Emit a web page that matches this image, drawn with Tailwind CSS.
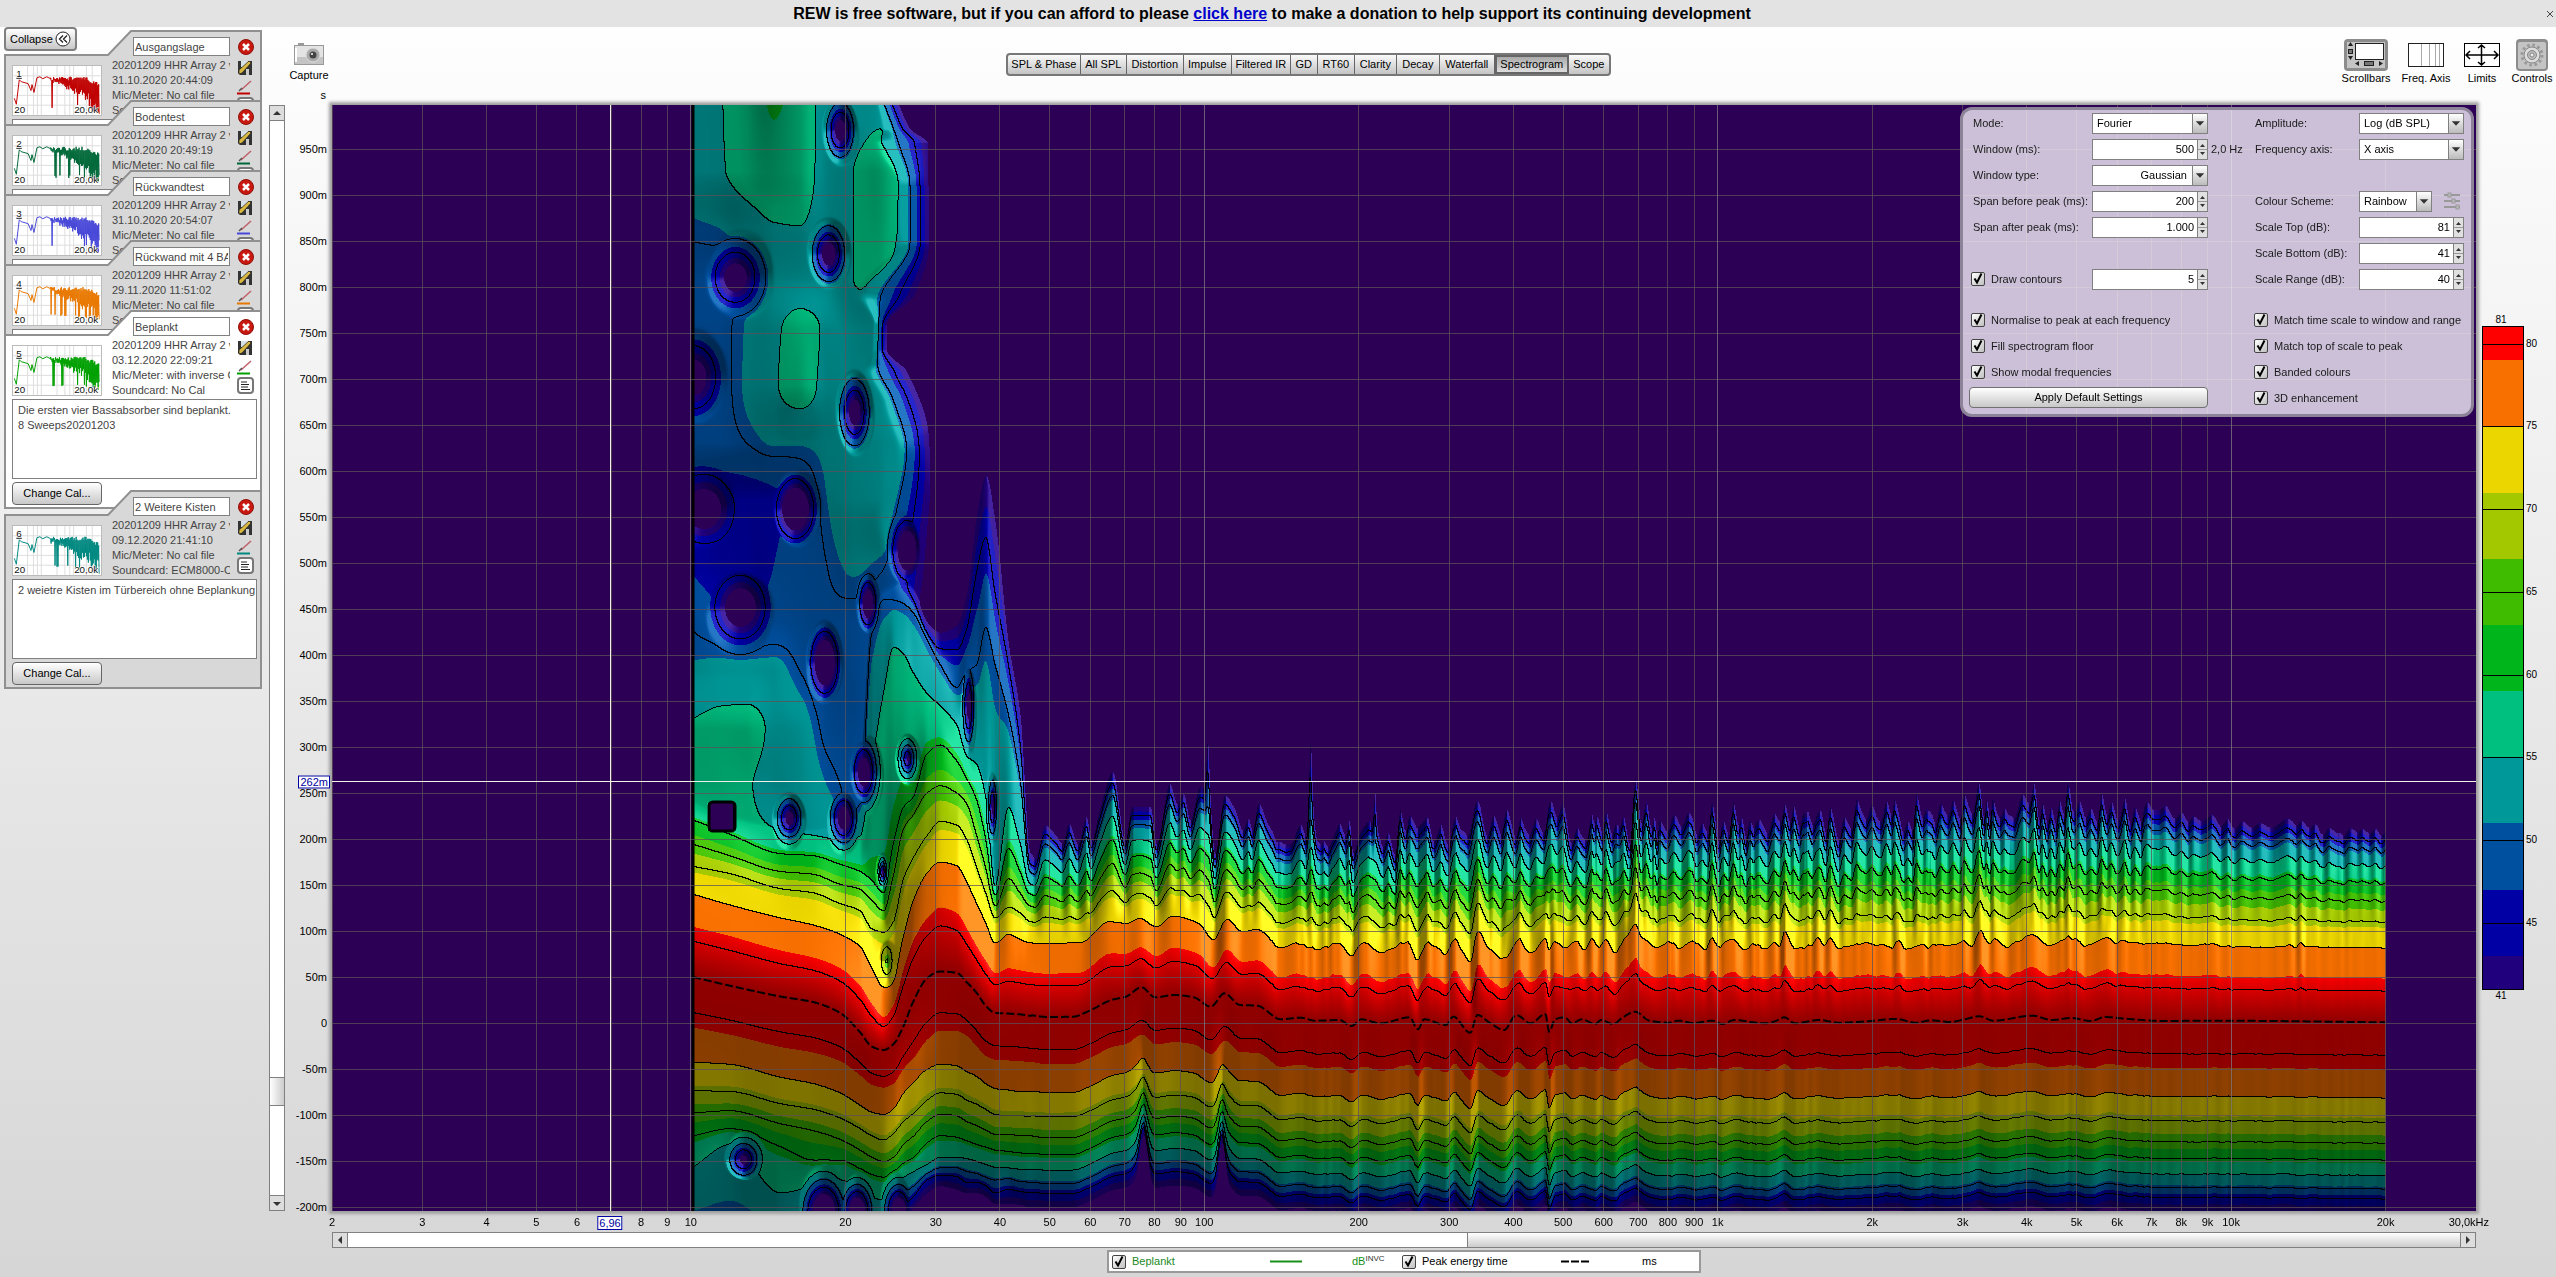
<!DOCTYPE html>
<html lang="en">
<head>
  <meta charset="UTF-8" />
  <meta name="viewport" content="width=device-width, initial-scale=1.0" />
  <title>REW | Spectrogram</title>
  <script src="https://cdn.jsdelivr.net/npm/@tailwindcss/browser@4"></script>
</head>
<body class="min-h-screen flex flex-col bg-linear-to-b from-white to-[#d6d6d6] font-['Liberation_Sans',Arial,sans-serif] text-[11px] leading-[15px] text-black">

  <!-- Donation banner -->
  <header class="h-[27px] shrink-0 bg-[#e3e3e3] flex items-center">
    <p class="flex-1 text-center text-[16px] leading-5 font-bold whitespace-pre">REW is free software, but if you can afford to please <a href="#" class="text-[#0000cc] underline">click here</a> to make a donation to help support its continuing development</p>
    <button aria-label="Close" class="w-3 h-4 flex items-center justify-center">
      <svg class="w-2 h-2" viewBox="0 0 8 8" stroke="#444" fill="none"><path d="M1 1l6 6M7 1l-6 6" /></svg>
    </button>
  </header>

  <div class="flex-1 flex">

    <!-- Measurement list -->
    <aside class="w-[265px] shrink-0 pl-1 relative">
      <button class="absolute left-1 top-0 w-[73px] h-6 rounded border-2 border-[#808080] bg-linear-to-b from-white to-[#c8c8c8] flex items-center justify-between pl-1 pr-1">Collapse
        <svg class="w-4 h-4" viewBox="0 0 16 16" fill="none" stroke="#222"><circle cx="8" cy="8" r="7" fill="#fff" /><path d="M8 4.500l-3.500 3.500 3.500 3.500M12 4.500l-3.500 3.500 3.500 3.500" stroke-width="1.300" /></svg>
      </button>
      <div id="measurements" class="pt-[3px]"></div>
    </aside>

    <main class="flex-1 min-w-0 flex flex-col">

      <!-- Toolbar -->
      <div class="h-[78px] shrink-0 flex pl-1">
        <div class="w-[300px] flex flex-col justify-between pl-[20px] pt-4">
          <button class="w-10 flex flex-col items-center gap-[3px]">
            <svg class="w-[30px] h-[22px]" viewBox="0 0 30 22">
              <rect x="4" y="0" width="6" height="3" fill="#999" />
              <rect x=".5" y="2.500" width="29" height="19" fill="#e4e4e4" stroke="#999" />
              <rect x="1" y="14" width="28" height="7" fill="#c4c4c4" /><path d="M2 5v14" stroke="#fff" stroke-width="2" />
              <circle cx="19" cy="12" r="7" fill="#aaa" stroke="#ddd" /><circle cx="19" cy="12" r="3.500" fill="#444" /><circle cx="18" cy="11" r="1" fill="#fff" />
            </svg>
            Capture
          </button>
          <span class="w-[37px] text-right pb-[2px]">s</span>
        </div>

        <div class="grow-[436]"></div>
        <nav id="graphTabs" class="mt-[26px] h-[23px] flex rounded border-2 border-[#777] bg-linear-to-b from-[#fafafa] to-[#c4c4c4] overflow-hidden"></nav>
        <div class="grow-[644]"></div>

        <div class="w-[300px] flex justify-end items-start gap-2 pt-3 pr-[3px]">
          <button class="w-[50px] flex flex-col items-center">
            <svg class="w-11 h-8" viewBox="0 0 44 32"><rect width="44" height="32" rx="4" fill="#8c8c8c" /><rect x="3" y="3" width="38" height="26" fill="#c4c4c4" /><rect x="11.500" y="4.500" width="28" height="16" fill="#fff" stroke="#222" /><path d="M6.500 3l2.500 4H4zM6.500 21l2.500-4H4zM11 24.500l4-2.500v5zM39 24.500l-4-2.500v5z" fill="#222" /><rect x="4.500" y="10.500" width="4" height="4" fill="#777" stroke="#222" /><rect x="20.500" y="22.500" width="9" height="4" fill="#777" stroke="#222" /></svg>
            Scrollbars
          </button>
          <button class="w-[54px] flex flex-col items-center whitespace-nowrap">
            <svg class="w-9 h-8" viewBox="0 0 36 32"><rect x=".5" y="4.500" width="35" height="23" fill="#fff" stroke="#222" /><path d="M13.500 5v22M21.500 5v22M27.500 5v22M31.500 5v22" stroke="#aaa" /></svg>
            Freq. Axis
          </button>
          <button class="w-[42px] flex flex-col items-center">
            <svg class="w-9 h-8" viewBox="0 0 36 32" fill="none" stroke="#000" stroke-width="1.500"><rect x=".5" y="4.500" width="35" height="23" fill="#fff" stroke-width="1" /><path d="M2 16h32M17.500 6v20M6 12l-4 4 4 4M30 12l4 4-4 4M14 9l3.500-3L21 9M14 23l3.500 3 3.500-3" /></svg>
            Limits
          </button>
          <button class="w-[42px] flex flex-col items-center">
            <svg class="w-8 h-8" viewBox="0 0 32 32"><rect width="32" height="32" rx="4" fill="#8c8c8c" /><rect x="2" y="3" width="28" height="27" rx="2" fill="#c4c4c4" /><circle cx="16" cy="16" r="10" fill="none" stroke="#999" stroke-width="3" stroke-dasharray="2.600 2.636" /><circle cx="16" cy="16" r="8" fill="#ddd" stroke="#888" /><circle cx="16" cy="16" r="4.500" fill="#bbb" stroke="#888" /><circle cx="16" cy="16" r="2" fill="#eee" stroke="#888" /></svg>
            Controls
          </button>
        </div>
      </div>

      <!-- Graph row -->
      <div class="flex-1 min-h-[700px] flex pl-1">
        <div class="w-4 flex flex-col border border-[#808080] bg-white" aria-hidden="true">
          <svg class="w-full h-[15px] border-b border-[#808080] bg-[#ddd]" viewBox="0 0 14 14"><path d="M7 5l4 4H3z" fill="#333" /></svg>
          <div class="grow-[957]"></div>
          <div class="h-[29px] border-y border-[#808080] bg-linear-to-r from-white to-[#ccc]"></div>
          <div class="grow-[89]"></div>
          <svg class="w-full h-[15px] border-t border-[#808080] bg-[#ddd]" viewBox="0 0 14 14"><path d="M7 10l4-4H3z" fill="#333" /></svg>
        </div>

        <div id="timeAxis" class="w-[47px] relative"></div>

        <div class="flex-1 min-w-0 relative bg-[#2c0054] shadow-[0_0_3px_3px_#a0a0a0]">
          <canvas id="spectrogram" width="2144" height="1106" class="absolute inset-0 w-full h-full"></canvas>
          <svg id="gridLines" class="absolute inset-0 w-full h-full" viewBox="0 0 2144 1106" preserveAspectRatio="none" shape-rendering="crispEdges"></svg>

          <!-- Graph controls -->
          <form class="absolute right-[2px] top-[2px] w-[514px] h-[310px] rounded-xl border-[3px] border-[#8d8398] bg-[#f4f0f9]/80 pl-[6px] pt-0 flex text-[#1a1a1a]">
            <div class="w-[283px]">
              <div class="h-[26px] flex items-center"><label for="mode" class="w-[123px] pl-1">Mode:</label>
                <span class="relative"><select id="mode" class="appearance-none w-[116px] h-[21px] border border-[#808080] bg-white pl-1 text-black"><option>Fourier</option></select>
                <svg class="absolute right-px top-px w-[15px] h-[19px] border-l border-[#808080] bg-linear-to-b from-white to-[#bbb] pointer-events-none" viewBox="0 0 15 19"><path d="M3 7h9l-4.500 5z" fill="#333" /></svg></span></div>
              <div class="h-[26px] flex items-center"><label for="windowMs" class="w-[123px] pl-1">Window (ms):</label><span data-spin="windowMs" data-value="500" class="w-[116px]"></span><span class="pl-[3px]">2,0 Hz</span></div>
              <div class="h-[26px] flex items-center"><label for="windowType" class="w-[123px] pl-1">Window type:</label>
                <span class="relative"><select id="windowType" class="appearance-none w-[116px] h-[21px] border border-[#808080] bg-white pr-5 text-black [text-align-last:right]"><option>Gaussian</option></select>
                <svg class="absolute right-px top-px w-[15px] h-[19px] border-l border-[#808080] bg-linear-to-b from-white to-[#bbb] pointer-events-none" viewBox="0 0 15 19"><path d="M3 7h9l-4.500 5z" fill="#333" /></svg></span></div>
              <div class="h-[26px] flex items-center"><label for="spanBefore" class="w-[123px] pl-1 whitespace-nowrap">Span before peak (ms):</label><span data-spin="spanBefore" data-value="200" class="w-[116px]"></span></div>
              <div class="h-[26px] flex items-center"><label for="spanAfter" class="w-[123px] pl-1">Span after peak (ms):</label><span data-spin="spanAfter" data-value="1.000" class="w-[116px]"></span></div>
              <div class="h-[26px]"></div>
              <div class="h-[26px] flex items-center mb-[15px]"><span data-check="Draw contours" class="w-[123px]"></span><span data-spin="contours" data-value="5" class="w-[116px]"></span></div>
              <div data-check="Normalise to peak at each frequency" class="h-[26px] flex items-center"></div>
              <div data-check="Fill spectrogram floor" class="h-[26px] flex items-center"></div>
              <div data-check="Show modal frequencies" class="h-[26px] flex items-center"></div>
              <button type="button" class="mt-[2px] w-[239px] h-[21px] rounded border border-[#707070] bg-linear-to-b from-white to-[#c8c8c8] text-black">Apply Default Settings</button>
            </div>
            <div class="flex-1">
              <div class="h-[26px] flex items-center"><label for="amplitude" class="w-[107px] pl-[3px]">Amplitude:</label>
                <span class="relative"><select id="amplitude" class="appearance-none w-[105px] h-[21px] border border-[#808080] bg-white pl-1 text-black"><option>Log (dB SPL)</option></select>
                <svg class="absolute right-px top-px w-[15px] h-[19px] border-l border-[#808080] bg-linear-to-b from-white to-[#bbb] pointer-events-none" viewBox="0 0 15 19"><path d="M3 7h9l-4.500 5z" fill="#333" /></svg></span></div>
              <div class="h-[26px] flex items-center"><label for="freqAxis" class="w-[107px] pl-[3px]">Frequency axis:</label>
                <span class="relative"><select id="freqAxis" class="appearance-none w-[105px] h-[21px] border border-[#808080] bg-white pl-1 text-black"><option>X axis</option></select>
                <svg class="absolute right-px top-px w-[15px] h-[19px] border-l border-[#808080] bg-linear-to-b from-white to-[#bbb] pointer-events-none" viewBox="0 0 15 19"><path d="M3 7h9l-4.500 5z" fill="#333" /></svg></span></div>
              <div class="h-[26px]"></div>
              <div class="h-[26px] flex items-center"><label for="scheme" class="w-[107px] pl-[3px]">Colour Scheme:</label>
                <span class="relative"><select id="scheme" class="appearance-none w-[73px] h-[21px] border border-[#808080] bg-white pl-1 text-black"><option>Rainbow</option></select>
                <svg class="absolute right-px top-px w-[15px] h-[19px] border-l border-[#808080] bg-linear-to-b from-white to-[#bbb] pointer-events-none" viewBox="0 0 15 19"><path d="M3 7h9l-4.500 5z" fill="#333" /></svg></span>
                <svg class="ml-3 w-4 h-[18px]" viewBox="0 0 16 18" stroke="#999" stroke-width="2" fill="#bbb"><path d="M0 3h16M0 9h16M0 15h16" /><rect x="4" y="1" width="3" height="4" stroke-width="1" /><rect x="8" y="7" width="3" height="4" stroke-width="1" /><rect x="12" y="13" width="3" height="4" stroke-width="1" /></svg></div>
              <div class="h-[26px] flex items-center"><label for="scaleTop" class="w-[107px] pl-[3px]">Scale Top (dB):</label><span data-spin="scaleTop" data-value="81" class="w-[105px]"></span></div>
              <div class="h-[26px] flex items-center"><label for="scaleBottom" class="w-[107px] pl-[3px]">Scale Bottom (dB):</label><span data-spin="scaleBottom" data-value="41" class="w-[105px]"></span></div>
              <div class="h-[26px] flex items-center mb-[15px]"><label for="scaleRange" class="w-[107px] pl-[3px]">Scale Range (dB):</label><span data-spin="scaleRange" data-value="40" class="w-[105px]"></span></div>
              <div data-check="Match time scale to window and range" class="h-[26px] flex items-center whitespace-nowrap"></div>
              <div data-check="Match top of scale to peak" class="h-[26px] flex items-center"></div>
              <div data-check="Banded colours" class="h-[26px] flex items-center"></div>
              <div data-check="3D enhancement" class="h-[26px] flex items-center"></div>
            </div>
          </form>
        </div>

        <!-- Colour scale -->
        <div class="w-20 shrink-0 pl-[6px] flex flex-col justify-center text-[10px] leading-[12px]">
          <div class="w-[42px] pr-1 text-center">81</div>
          <div class="h-[60%] w-[42px] relative border border-black flex flex-col" id="colourScale"></div>
          <div class="w-[42px] pr-1 text-center">41</div>
        </div>
      </div>

      <!-- Frequency axis, scroll bar and legend -->
      <div class="shrink-0 pl-[67px] pr-20">
        <div id="freqAxisLabels" class="h-[21px] relative"></div>
        <div class="h-4 flex border border-[#808080] bg-white" aria-hidden="true">
          <svg class="w-[15px] h-full border-r border-[#808080] bg-[#ddd]" viewBox="0 0 14 14"><path d="M5 7l4-4v8z" fill="#333" /></svg>
          <div class="grow-[1120]"></div>
          <div class="grow-[992] border-l border-[#808080] bg-linear-to-b from-white to-[#ccc]"></div>
          <svg class="w-[15px] h-full border-l border-[#808080] bg-[#ddd]" viewBox="0 0 14 14"><path d="M9 7L5 3v8z" fill="#333" /></svg>
        </div>
        <div class="h-[29px] flex justify-center items-start pt-[2px]">
          <div class="w-[594px] h-[23px] border-2 border-[#999] bg-white flex items-center pl-px">
            <span data-check="Beplankt" class="w-[160px] text-[#228822]"></span>
            <svg class="w-8 h-[3px]" viewBox="0 0 32 3"><path d="M0 1.500h32" stroke="#189018" stroke-width="2" /></svg>
            <span class="w-[98px] pl-[50px] text-[#189018] whitespace-nowrap">dB<sup class="text-[8px] text-[#333]">INVC</sup></span>
            <span data-check="Peak energy time" class="w-[161px]"></span>
            <svg class="w-7 h-[3px]" viewBox="0 0 28 3"><path d="M0 1.500h28" stroke="#000" stroke-width="2" stroke-dasharray="8 2" /></svg>
            <span class="pl-[53px]">ms</span>
          </div>
        </div>
      </div>
    </main>
  </div>

  <script>
    // small seeded generator so that every load draws the same traces
    let seed = 7;
    function rnd() {
      seed = (seed * 1664525 + 1013904223) % 4294967296;
      return seed / 4294967296;
    }

    // ---------- form parts ----------
    document.querySelectorAll('[data-spin]').forEach(el => {
      el.innerHTML = `<span class="flex h-[21px] border border-[#808080] bg-white">
        <input id="${el.dataset.spin}" type="text" value="${el.dataset.value}" class="flex-1 min-w-0 text-right pr-[3px] text-black outline-none">
        <svg class="w-[10px] h-[19px] border-l border-[#808080] bg-[#e0e0e0]" viewBox="0 0 9 19"><path d="M0 9.500h9" stroke="#999" /><path d="M4.500 4l2.500 3h-5zM4.500 15l2.500-3h-5z" fill="#333" /></svg></span>`;
    });

    document.querySelectorAll('[data-check]').forEach(el => {
      el.innerHTML = `<label class="flex items-center gap-[6px]"><span class="relative w-[14px] h-[14px] ml-[2px]">
        <input type="checkbox" checked class="appearance-none block w-[14px] h-[14px] rounded-[2px] border border-[#444] bg-linear-to-br from-white to-[#c0c0c0]">
        <svg class="absolute inset-0 w-full h-full pointer-events-none" viewBox="0 0 14 14" fill="none" stroke="#000" stroke-width="2"><path d="M3.500 6.500l2.500 4 4.500-9" /></svg></span>${el.dataset.check}</label>`;
    });

    const tabs = [
      ['SPL &amp; Phase', 73], ['All SPL', 46], ['Distortion', 57], ['Impulse', 48], ['Filtered IR', 59], ['GD', 27],
      ['RT60', 37], ['Clarity', 42], ['Decay', 43], ['Waterfall', 55], ['Spectrogram', 74], ['Scope', 40]
    ];
    document.getElementById('graphTabs').innerHTML = tabs.map(([name, w]) => name === 'Spectrogram'
      ? `<button style="width:${w}px" class="h-full whitespace-nowrap border-2 border-[#666] bg-linear-to-b from-[#aaa] to-[#ddd]">${name}</button>`
      : `<button style="width:${w}px" class="h-full whitespace-nowrap border-r border-[#666] last:border-r-0">${name}</button>`).join('');

    // ---------- measurements ----------
    const measurements = [
      { name: 'Ausgangslage', date: '31.10.2020 20:44:09', mic: 'No cal file', card: 'No Cal', colour: '#c00000', notes: '' },
      { name: 'Bodentest', date: '31.10.2020 20:49:19', mic: 'No cal file', card: 'No Cal', colour: '#006838', notes: '' },
      { name: 'Rückwandtest', date: '31.10.2020 20:54:07', mic: 'No cal file', card: 'No Cal', colour: '#4848d8', notes: '' },
      { name: 'Rückwand mit 4 BA', date: '29.11.2020 11:51:02', mic: 'No cal file', card: 'No Cal', colour: '#e87800', notes: '' },
      { name: 'Beplankt', date: '03.12.2020 22:09:21', mic: 'with inverse C', card: 'No Cal', colour: '#00a000', notes: 'Die ersten vier Bassabsorber sind beplankt.\n8 Sweeps20201203', selected: true },
      { name: '2 Weitere Kisten', date: '09.12.2020 21:41:10', mic: 'No cal file', card: 'ECM8000-CSL', colour: '#008880', notes: '2 weietre Kisten im Türbereich ohne Beplankung' }
    ];

    function thumbTrace() {
      let d = 'M1 33L3 39L6 14L8 16L15 18L18 25L19 19L21 27L24 12L27 11L30 13L34 11L38 13';
      for (let x = 38; x < 88; x += 1) {
        const p = (x - 38) / 50;
        const top = 11 + 4 * rnd() + 12 * Math.max(0, p - 0.72) * 2;
        const depth = rnd() < 0.14 ? 28 : 3 + 30 * Math.max(0, p - 0.1) * (0.5 + 0.6 * rnd());
        d += `L${x} ${top.toFixed(1)}L${x + 0.5} ${Math.min(49, top + depth).toFixed(1)}`;
      }
      return d;
    }

    document.getElementById('measurements').innerHTML = measurements.map((m, i) => {
      const fill = m.selected ? '#ffffff' : '#d8d8d8';
      const gap = i === 5 ? 'mt-[-19px]' : i ? 'mt-[-129px]' : '';
      return `
      <section class="relative w-[258px] h-[199px] ${gap}">
        <svg class="absolute inset-0 w-full h-full pointer-events-none" viewBox="0 0 258 199"><path d="M1 198V25H104L127 1H257V198Z" fill="${fill}" stroke="#909090" stroke-width="2" /></svg>
        <div class="relative pl-2 pr-1 pt-[7px]">
          <div class="flex justify-end items-center h-[19px]">
            <input type="text" aria-label="Measurement name" value="${m.name}" class="w-[97px] h-[19px] border border-[#808080] bg-white px-px text-[#444]">
            <button aria-label="Delete" class="ml-2 mr-1"><svg class="w-4 h-4" viewBox="0 0 16 16"><circle cx="8" cy="8" r="7.500" fill="#c81810" stroke="#901008" /><path d="M5 5l6 6M11 5l-6 6" stroke="#fff" stroke-width="2.500" /></svg></button>
          </div>
          <div class="flex pt-[2px]">
            <svg class="w-[90px] h-[51px] mt-[7px] bg-white border border-[#bbb]" viewBox="0 0 89 50">
              <path d="M0 10H89M0 20H89M0 30H89M0 40H89M14.500 0V50M20.500 0V50M24.500 0V50M28.500 0V50M44.500 0V50M52.500 0V50M57.500 0V50M61.500 0V50M74.500 0V50M80.500 0V50" stroke="#ddd" fill="none" />
              <path d="${thumbTrace()}" stroke="${m.colour}" fill="none" />
              <g font-size="10" fill="#111" stroke="#fff" stroke-width="1" paint-order="stroke"><text x="3" y="11" text-decoration="underline">${i + 1}</text><text x="1" y="48">20</text><text x="62" y="48">20,0k</text></g>
            </svg>
            <div class="ml-[10px] w-[118px] overflow-hidden whitespace-nowrap text-[#444]">
              <p>20201209 HHR Array 2 v</p><p>${m.date}</p><p>Mic/Meter: ${m.mic}</p><p>Soundcard: ${m.card}</p>
            </div>
            <div class="ml-[7px] mt-[2px] flex flex-col gap-[2px]">
              <svg class="w-4 h-4" viewBox="0 0 16 16"><path d="M1 1h14v14H3l-2-2z" fill="#333" /><rect x="4" y="1" width="7" height="6" fill="#d8e0e8" /><path d="M2 10L12 1l2 2-9 10-3 1z" fill="#d8b840" stroke="#222" stroke-width=".700" /><rect x="9" y="9" width="3" height="6" fill="#ccc" /></svg>
              <svg class="w-4 h-[17px]" viewBox="0 0 16 17"><path d="M4 12L14 3" stroke="#c06068" stroke-width="1.500" /><path d="M2 13l3-3" stroke="#555" stroke-width="1.500" /><path d="M0 15.500h13" stroke="${m.colour}" stroke-width="2" /></svg>
              <svg class="w-[17px] h-[17px]" viewBox="0 0 17 17"><rect x="1" y="1" width="15" height="15" rx="3" fill="#fff" stroke="#777" stroke-width="2" /><path d="M4 5h6M4 7.500h8M4 10h7M4 12.500h9" stroke="#222" /></svg>
            </div>
          </div>
          <textarea aria-label="Notes" class="block mt-[1px] w-[245px] h-[80px] resize-none border border-[#808080] bg-white pl-[5px] pt-[3px] text-[#444] overflow-hidden">${m.notes}</textarea>
          <button class="mt-[3px] w-[90px] h-[23px] rounded border border-[#666] bg-linear-to-b from-white to-[#c8c8c8]">Change Cal...</button>
        </div>
      </section>`;
    }).join('');

    // ---------- axes ----------
    const W = 2144, H = 1106, DECADE = 513.4, ZERO = 918;
    const freqX = f => Math.log10(f / 2) * DECADE;
    const timeY = ms => ZERO - ms * 0.92;

    let lines = '', labels = '';
    for (let ms = -200; ms <= 950; ms += 50) {
      const y = timeY(ms);
      lines += `<path d="M0 ${y}H${W}" stroke="#5c5058" stroke-opacity=".75" />`;
      labels += `<span style="top:${y / H * 100}%" class="absolute right-[5px] -translate-y-1/2">${ms ? ms + 'm' : 0}</span>`;
    }
    labels += `<span style="top:${timeY(262) / H * 100}%" class="absolute right-[2px] -translate-y-1/2 z-10 border border-[#0000a0] bg-white text-[#0000a0] leading-[11px] px-px">262m</span>`;
    document.getElementById('timeAxis').innerHTML = labels;

    labels = '';
    for (const dec of [1, 10, 100, 1000, 10000]) {
      for (let n = 1; n < 10; n++) {
        const f = n * dec;
        if (f < 2 || f > 20000) continue;
        lines += `<path d="M${freqX(f)} 0V${H}" stroke="${n === 1 ? '#807880' : '#5c5058'}" stroke-opacity=".75" />`;
        if (f === 7) continue;
        labels += `<span style="left:${freqX(f) / W * 100}%" class="absolute top-1 -translate-x-1/2">${f >= 1000 ? f / 1000 + 'k' : f}</span>`;
      }
    }
    labels += `<span class="absolute top-1 right-[-13px]">30,0kHz</span>
      <span style="left:${freqX(6.96) / W * 100}%" class="absolute top-[5px] -translate-x-1/2 border border-[#0000a0] bg-white text-[#0000a0] leading-[12px] px-px">6,96</span>`;
    document.getElementById('freqAxisLabels').innerHTML = labels;
    lines += `<path d="M${freqX(6.96)} 0V${H}M0 ${timeY(262)}H${W}" stroke="#f0f0e8" />`;
    document.getElementById('gridLines').innerHTML = lines;

    // ---------- colour scale ----------
    const bands = [
      [79, 255, 0, 0], [75, 248, 112, 0], [71, 236, 214, 0], [67, 164, 200, 0], [63, 64, 188, 0], [59, 0, 180, 28],
      [55, 0, 192, 128], [51, 0, 152, 152], [47, 0, 80, 160], [43, 0, 0, 164], [41, 32, 0, 124]
    ];
    let scale = '', from = 81;
    for (const [to, r, g, b] of bands) {
      scale += `<div style="height:${(from - to) * 2.5}%;background:rgb(${r},${g},${b})"></div>`;
      from = to;
    }
    for (let db = 80; db > 41; db -= 5) {
      scale += `<div style="top:${(81 - db) * 2.5}%" class="absolute left-0 w-full border-t border-black"></div>
        <span style="top:${(81 - db) * 2.5}%" class="absolute left-[43px] -translate-y-1/2">${db}</span>`;
    }
    document.getElementById('colourScale').innerHTML = scale;

    // ---------- spectrogram ----------
    // level contours from top to bottom, the peak (81) in the middle
    const levels = [41, 45, 50, 55, 60, 65, 70, 75, 79, 81, 79, 75, 70, 65, 60, 55, 50, 45, 41];

    // contour heights at the modal frequencies, one row per x
    const modal = [
      [40, 925, 950, 970, 985, 1008, 1042, 1073, 1112, 1157, 1228, 1298, 1347, 1387, 1418, 1450, 1493, 1570, 1640, 1700],
      [150, 940, 960, 980, 1003, 1028, 1058, 1083, 1127, 1170, 1240, 1308, 1350, 1388, 1415, 1440, 1462, 1560, 1620, 1700],
      [300, 960, 985, 1005, 1025, 1055, 1080, 1104, 1145, 1190, 1255, 1325, 1368, 1405, 1433, 1465, 1530, 1590, 1640, 1700],
      [400, 975, 990, 1010, 1030, 1058, 1084, 1110, 1155, 1200, 1263, 1333, 1377, 1413, 1443, 1484, 1520, 1560, 1600, 1640],
      [480, 960, 985, 1010, 1035, 1070, 1098, 1125, 1168, 1215, 1278, 1345, 1390, 1425, 1455, 1484, 1512, 1545, 1580, 1600],
      [540, 900, 930, 985, 1030, 1080, 1105, 1135, 1185, 1240, 1305, 1365, 1407, 1440, 1470, 1496, 1525, 1560, 1590, 1610],
      [575, 690, 710, 745, 930, 1092, 1120, 1160, 1215, 1265, 1325, 1378, 1417, 1450, 1480, 1504, 1536, 1575, 1600, 1620],
      [610, 640, 660, 700, 830, 1110, 1135, 1165, 1240, 1283, 1330, 1382, 1420, 1456, 1486, 1508, 1540, 1570, 1590, 1610],
      [640, 630, 655, 700, 766, 1040, 1085, 1150, 1230, 1265, 1322, 1376, 1412, 1446, 1480, 1500, 1522, 1552, 1575, 1595],
      [670, 640, 675, 705, 775, 990, 1020, 1090, 1170, 1215, 1297, 1355, 1390, 1430, 1462, 1488, 1508, 1532, 1550, 1570],
      [700, 680, 700, 718, 802, 975, 1000, 1060, 1120, 1175, 1262, 1340, 1375, 1418, 1450, 1480, 1500, 1520, 1535, 1550],
      [740, 730, 745, 755, 830, 915, 970, 1030, 1082, 1145, 1230, 1315, 1357, 1400, 1430, 1460, 1490, 1503, 1512, 1530],
      [780, 745, 768, 790, 848, 903, 960, 1010, 1067, 1130, 1220, 1302, 1350, 1390, 1420, 1450, 1480, 1495, 1505, 1520],
      [830, 735, 770, 822, 875, 925, 970, 1015, 1072, 1138, 1222, 1303, 1352, 1392, 1422, 1452, 1480, 1495, 1507, 1525],
      [860, 690, 740, 800, 918, 950, 985, 1035, 1095, 1160, 1235, 1310, 1360, 1400, 1430, 1457, 1482, 1500, 1515, 1530],
      [890, 580, 660, 790, 930, 980, 1030, 1075, 1125, 1185, 1250, 1325, 1367, 1406, 1436, 1462, 1486, 1503, 1515, 1530],
      [917, 525, 612, 738, 975, 1035, 1075, 1110, 1152, 1205, 1268, 1338, 1377, 1413, 1442, 1466, 1490, 1508, 1520, 1535],
      [945, 590, 690, 790, 1100, 1113, 1128, 1145, 1180, 1222, 1278, 1343, 1384, 1420, 1448, 1470, 1494, 1512, 1530, 1545],
      [985, 760, 790, 860, 990, 1048, 1090, 1130, 1168, 1215, 1279, 1344, 1386, 1422, 1448, 1472, 1495, 1510, 1525, 1545],
      [1020, 860, 900, 950, 1040, 1080, 1110, 1138, 1175, 1218, 1280, 1345, 1388, 1422, 1450, 1474, 1497, 1514, 1528, 1546],
      [1050, 1050, 1068, 1080, 1098, 1112, 1128, 1150, 1180, 1220, 1282, 1346, 1388, 1423, 1450, 1475, 1498, 1515, 1530, 1550],
      [1130, 1020, 1050, 1065, 1083, 1100, 1120, 1145, 1180, 1220, 1283, 1346, 1388, 1423, 1450, 1475, 1498, 1515, 1530, 1550]
    ];
    // decay shape above 45 Hz
    const base = [300, 325, 352, 395, 440, 490, 548, 622, 712, 845, 985, 1072, 1145, 1208, 1258, 1305, 1345, 1375, 1415];
    const spread = [1, 0.93, 0.85, 0.7, 0.5, 0.33, 0.15, 0];
    const peakLine = [0, 817, 60, 825, 100, 831, 150, 830, 185, 812, 230, 780, 260, 770, 292, 742, 320, 772, 360, 765, 400, 772, 435, 800, 463, 760, 495, 795, 530, 797, 580, 838, 620, 833, 650, 842, 700, 840, 725, 858, 745, 838, 785, 850, 845, 832, 862, 868, 875, 838, 920, 855, 935, 830, 970, 878, 985, 825, 1010, 848, 1040, 870, 1065, 825, 1095, 850, 1125, 822, 1133, 875, 1145, 838, 1165, 832, 1180, 850, 1200, 838, 1228, 852, 1240, 840, 1265, 852, 1285, 832, 1310, 815, 1340, 842, 1380, 848, 1400, 842, 1430, 849, 1470, 842, 1490, 852, 1515, 840, 1560, 848, 1580, 850, 1600, 843, 1618, 832, 1640, 850, 1690, 840, 1730, 848, 1780, 845, 1848, 837, 1890, 848, 1920, 841, 1960, 846, 1990, 838, 2020, 829, 2050, 842, 2130, 827, 2170, 840, 2210, 834, 2250, 843, 2280, 831, 2320, 836, 2400, 843, 2500, 842, 2860, 847];
    const midLine = [0, 605, 28, 582, 70, 610, 165, 608, 225, 545, 260, 550, 288, 535, 322, 560, 355, 528, 410, 550, 440, 598, 468, 537, 500, 575, 530, 568, 580, 620, 610, 610, 650, 625, 697, 610, 725, 645, 745, 607, 785, 635, 840, 605, 862, 658, 880, 607, 920, 640, 935, 597, 970, 665, 985, 575, 1010, 625, 1040, 658, 1070, 600, 1095, 640, 1125, 595, 1133, 630, 1145, 605, 1165, 625, 1190, 602, 1205, 630, 1220, 600, 1235, 625, 1250, 598, 1268, 635, 1310, 555, 1325, 590, 1350, 620, 1388, 605, 1400, 625, 1435, 605, 1455, 625, 1468, 595, 1480, 620, 1512, 600, 1530, 625, 1560, 612, 1575, 628, 1597, 605, 1608, 622, 1619, 578, 1640, 626, 1670, 618, 1687, 595, 1700, 612, 1712, 590, 1728, 622, 1800, 612, 1840, 620, 1849, 600, 1870, 622, 1900, 610, 1915, 620, 1940, 608, 1960, 620, 1987, 600, 2005, 615, 2024, 575, 2042, 614, 2052, 600, 2075, 622, 2100, 605, 2133, 585, 2165, 615, 2207, 592, 2240, 615, 2279, 592, 2300, 610, 2320, 600, 2350, 612, 2397, 610, 2440, 616, 2497, 612, 2520, 618, 2645, 622, 2660, 616, 2672, 622, 2683, 605, 2695, 620, 2860, 624];
    const floorLine = [0, 160, 40, 250, 70, 370, 92, 255, 115, 285, 128, 310, 142, 250, 160, 310, 178, 230, 188, 300, 205, 210, 232, 95, 258, 300, 272, 200, 310, 200, 322, 310, 350, 130, 365, 190, 378, 160, 392, 240, 412, 140, 430, 160, 443, 340, 463, 165, 485, 210, 500, 270, 512, 235, 520, 270, 533, 190, 552, 250, 570, 290, 600, 310, 620, 250, 630, 290, 640, 200, 655, 290, 680, 310, 700, 250, 712, 290, 720, 235, 728, 330, 745, 260];
    const floorPeaks = [773, 250, 800, 280, 825, 215, 845, 225, 877, 225, 910, 260, 935, 235, 983, 180, 1018, 230, 1045, 215, 1075, 240, 1105, 235, 1133, 190, 1160, 195, 1190, 260, 1220, 235, 1230, 235, 1250, 215, 1270, 240, 1285, 240, 1310, 125, 1332, 190, 1350, 230, 1360, 235, 1388, 215, 1420, 230, 1450, 240, 1468, 190, 1490, 250, 1512, 190, 1530, 235, 1545, 235, 1560, 235, 1597, 215, 1619, 200, 1637, 200, 1657, 215, 1692, 210, 1712, 195, 1740, 235, 1767, 190, 1799, 195, 1829, 185, 1845, 165, 1872, 230, 1890, 150, 1912, 195, 1940, 180, 1967, 190, 1989, 160, 2019, 140, 2035, 180, 2047, 190, 2072, 210, 2107, 165, 2133, 130, 2150, 180, 2167, 200, 2185, 185, 2202, 140, 2227, 190, 2250, 200, 2272, 155, 2292, 200, 2320, 170, 2340, 205, 2362, 190, 2402, 200, 2437, 220, 2460, 225, 2497, 225, 2530, 240, 2560, 245, 2597, 248, 2654, 240, 2685, 235, 2712, 255, 2742, 262, 2787, 265, 2810, 266, 2835, 268, 2858, 270];
    for (let i = 0; i < floorPeaks.length; i += 2) {
      const x = floorPeaks[i], y = floorPeaks[i + 1];
      floorLine.push(x, y);
      if (i + 2 < floorPeaks.length) {
        const dip = x > 2350 ? 10 + 10 * rnd() : 25 + 35 * rnd();
        floorLine.push((x * 0.4 + floorPeaks[i + 2] * 0.6), Math.max(y, floorPeaks[i + 3]) + dip);
      }
    }

    // monotone cubic through the points xs, ys
    function curve(xs, ys) {
      const n = xs.length, d = [], m = [];
      for (let i = 0; i < n - 1; i++) d.push((ys[i + 1] - ys[i]) / (xs[i + 1] - xs[i]));
      for (let i = 0; i < n; i++) {
        const a = d[Math.max(0, i - 1)], b = d[Math.min(n - 2, i)];
        m.push(a * b <= 0 ? 0 : 2 * a * b / (a + b));
      }
      return x => {
        if (x <= xs[0]) return ys[0];
        if (x >= xs[n - 1]) return ys[n - 1];
        let lo = 0, hi = n - 1;
        while (hi - lo > 1) { const mid = (lo + hi) >> 1; if (xs[mid] <= x) lo = mid; else hi = mid; }
        const h = xs[hi] - xs[lo], t = (x - xs[lo]) / h, t2 = t * t, t3 = t2 * t;
        return (2 * t3 - 3 * t2 + 1) * ys[lo] + (t3 - 2 * t2 + t) * h * m[lo] + (3 * t2 - 2 * t3) * ys[hi] + (t3 - t2) * h * m[hi];
      };
    }
    const pairs = a => curve(a.filter((_, i) => i % 2 === 0), a.filter((_, i) => i % 2 === 1));

    const modalCurves = levels.map((_, k) => curve(modal.map(r => r[0]), modal.map(r => r[k + 1])));
    const peakAt = pairs(peakLine), midAt = pairs(midLine), floorAt = pairs(floorLine);
    const bell = (x, c, w) => Math.exp(-(((x - c) / w) ** 2));

    // fine ripple, one value every four pixels
    const ripple = Array.from({ length: 540 }, () => rnd() - 0.5);
    function rippleAt(px) {
      const i = Math.floor(px / 4), t = px / 4 - i;
      return ripple[i] * (1 - t) + ripple[i + 1] * t;
    }

    function column(px) {
      const cx = (px - 348) * 3, tx = (px - 668) * 2.063;
      const mix = Math.min(1, Math.max(0, (px - 694) / 14));
      const jitter = tx > 560 ? rippleAt(px) : 0;
      const out = [];
      let dp, dm, df;
      if (mix > 0) {
        dp = peakAt(tx) - 845 + jitter * 4;
        dm = midAt(tx) - 622 + jitter * (tx > 2350 ? 5 : 12);
        df = floorAt(tx) - 300 + jitter * (tx > 2350 ? 14 : 30);
      }
      for (let k = 0; k < levels.length; k++) {
        let y = 0;
        if (mix < 1) y += (1 - mix) * (modalCurves[k](cx) / 1.4 - 5);
        if (mix > 0) {
          let v = base[k];
          if (k < 8) {
            v += dm * (1 - spread[k]) + df * spread[k];
            v -= (k < 3 ? [190, 120, 30][k] : 0) * (bell(tx, 640, 4) + 0.8 * bell(tx, 428, 4) + 0.5 * bell(tx, 773, 3));
          } else if (k === 8) v += dm * 0.7 + dp * 0.3;
          else v += dp;
          if (k > 10) v -= (k - 10) * 16 * (bell(tx, 296, 11) + bell(tx, 457, 9));
          y += mix * (v / 3 + 635);
        }
        out.push(k && y < out[k - 1] + 1 ? out[k - 1] + 1 : y);
      }
      return out;
    }

    // slowly decaying low frequency field
    const fieldX = [40, 120, 200, 280, 360, 440, 520, 600, 680];
    const fieldY = [0, 100, 180, 250, 320, 400, 480, 560, 650, 730, 800, 880, 960, 1040];
    const field = [
      [53, 54.8, 57, 59.4, 57.5, 53.5, 52, 53, 52], [53, 54.6, 56.5, 57.8, 57, 53.8, 55, 57, 54],
      [50.5, 51, 53, 54.7, 54.9, 53.5, 55, 56.5, 54], [49, 49, 50.5, 53, 53.5, 53, 55, 55.8, 52],
      [49.5, 49.5, 51.3, 54.3, 56, 54.6, 53.5, 54, 51], [49, 49.3, 51.5, 54.5, 56.5, 54, 53, 53, 52],
      [48.5, 49, 50, 51.2, 51.2, 51.8, 53.5, 54.3, 52.5], [45, 45, 45.5, 46.5, 48, 51, 53.8, 54.8, 51.5],
      [46.5, 45.4, 45.4, 47, 48.5, 50, 51.5, 50.5, 48], [49.6, 48.5, 48.3, 48.5, 49, 49.5, 49.5, 48, 44],
      [51.5, 52, 52, 52, 50, 49, 49.5, 47, 40], [55.3, 56, 56.2, 54.3, 52.5, 49.5, 49, 46, 40],
      [55.5, 56, 55.3, 53.8, 53.3, 51, 49, 46, 40], [58, 57, 56, 55.5, 55, 54, 50, 46, 40]
    ].map(r => curve(fieldX, r));
    const edge50 = pairs([0, 608, 60, 655, 120, 690, 200, 690, 280, 600, 370, 593, 420, 640, 490, 680, 600, 640, 650, 630, 720, 620, 800, 600]);
    const edge41 = pairs([0, 650, 40, 690, 60, 742, 200, 745, 270, 705, 315, 618, 350, 620, 380, 680, 470, 745, 530, 750, 600, 740, 690, 720, 800, 650]);

    // x, y, core radii, ratio of the outer ring to the core
    const dips = [
      [480, 42, 16, 15, 2.7], [445, 215, 20, 16, 2.6], [165, 248, 34, 20, 2.9], [40, 388, 38, 25, 2.9], [523, 437, 17, 18, 2.8], [70, 572, 52, 28, 2.8],
      [345, 572, 40, 30, 2], [180, 710, 46, 27, 2.6], [563, 705, 16, 20, 2.2], [433, 787, 30, 32, 1.9], [680, 630, 28, 28, 2.2],
      [865, 848, 6, 18, 3], [682, 922, 3, 3, 7], [937, 990, 3, 9, 4.5], [550, 940, 18, 20, 2.3], [327, 1005, 12, 9, 3.2],
      [490, 1005, 18, 16, 2.3], [607, 1080, 2, 3, 5], [190, 1483, 11, 6, 4],
      [430, 1556, 34, 25, 1.9], [530, 1556, 24, 20, 2], [655, 1556, 22, 20, 2]
    ];
    const softMin = (a, b, k) => Math.abs(a - b) > 6 * k ? Math.min(a, b) : -k * Math.log(Math.exp(-a / k) + Math.exp(-b / k));

    function draw() {
      const x0 = 361, x1 = 2054;
      const v = new Float32Array(W * H).fill(30);
      const soft = new Float32Array(W * H);
      for (let x = x0; x < x1; x++) {
        const ys = column(x), cx = (x - 348) * 3;
        const low = x < 730;
        const rows = low ? field.map(f => f(cx)) : null;
        const rowAt = low ? curve(fieldY, rows) : null;
        let k = 0;
        for (let y = 0; y < H; y++) {
          while (k < 19 && ys[k] <= y) k++;
          let val;
          if (k === 0) val = 41 - (ys[0] - y) * 0.25;
          else if (k === 19) val = 41 - (y - ys[18]) * 0.25;
          else if (k === 9) val = 81 - 2 * ((ys[9] - y) / (ys[9] - ys[8])) ** 2;
          else if (k === 10) val = 81 - 2 * ((y - ys[9]) / (ys[10] - ys[9])) ** 2;
          else val = levels[k - 1] + (levels[k] - levels[k - 1]) * (y - ys[k - 1]) / (ys[k] - ys[k - 1]);
          if (low) {
            const cy = (y + 5) * 1.4;
            if (cy < 1060 && cx < 800) {
              const e = edge50(cy), g = edge41(cy);
              const f = softMin(rowAt(cy), 50 - 9 * (cx - e) / (g - e), 0.6);
              if (f > val - 3) val = -softMin(-f, -val, 0.5);
            }
            for (const [dx, dy, rx, ry, out] of dips) {
              const d = Math.hypot((cx - dx) / rx, (cy - dy) / ry);
              if (d < out * 2) val = softMin(val, 41 + 10 * (d - 1) / (out - 1), 0.4);
            }
            const q = Math.hypot((cx - 620) / 16, (cy - 1205) / 19);
            if (q < 4) val = softMin(val, 64 + 6 * q, 0.8);
            if (cx > 86 && cx < 162 && cy > 984 && cy < 1022) val = 30;
            if (cy < 1100) soft[y * W + x] = Math.max(0, Math.min(1, (60 - val) / 4));
          }
          v[y * W + x] = val;
        }
      }

      const ctx = document.getElementById('spectrogram').getContext('2d');
      const img = ctx.createImageData(W, H), px = img.data;
      for (let y = 0; y < H; y++) {
        for (let x = x0; x < x1; x++) {
          const i = y * W + x, val = v[i], o = i * 4;
          const right = x < x1 - 1 ? v[i + 1] : val, down = y < H - 1 ? v[i + W] : val;
          px[o + 3] = 255;
          if (val < 41) { px[o] = 44; px[o + 1] = 0; px[o + 2] = 84; }
          else {
            let c = bands[bands.length - 1];
            for (const b of bands) if (val >= b[0]) { c = b; break; }
            const left = x > x0 + 1 ? v[i - 2] : val, far = x < x1 - 2 ? v[i + 2] : val;
            const gx = Math.max(-0.3, Math.min(0.3, (far - left) / 4));
            const gy = down - val, s = soft[i];
            let light = 0.56 + 0.26 * s + (0.4 - 0.24 * s) * Math.max(-1, Math.min(1, gy / 0.09)) * (gy > 0 ? 1 : s);
            light -= gx * (gy > 0 ? 1.3 - 0.6 * s : 0.7);
            light = Math.max(0.52, Math.min(1.15, light));
            const white = Math.max(0, light - 1) * 255;
            light = Math.min(1, light);
            px[o] = c[1] * light + white; px[o + 1] = c[2] * light + white; px[o + 2] = c[3] * light + white;
          }
          const step = Math.floor(val / 5);
          if ((step !== Math.floor(right / 5) || step !== Math.floor(down / 5)) && Math.max(val, right, down) >= 45) {
            px[o] = px[o + 1] = px[o + 2] = 0;
          }
        }
      }
      ctx.putImageData(img, 0, 0);

      // peak energy time
      ctx.strokeStyle = '#000';
      ctx.lineWidth = 2;
      ctx.setLineDash([8, 3]);
      ctx.beginPath();
      for (let x = x0; x < x1; x++) {
        const y = x < 700 ? modalCurves[9]((x - 348) * 3) / 1.4 - 5 : peakAt((x - 668) * 2.063) / 3 + 635;
        ctx.lineTo(x, y);
      }
      ctx.stroke();
      ctx.setLineDash([]);
      ctx.beginPath();
      ctx.roundRect(377, 697, 26, 29, 4);
      ctx.lineWidth = 3;
      ctx.stroke();
      ctx.beginPath();
      ctx.moveTo(x0, 0);
      ctx.lineTo(x0, H);
      ctx.stroke();
    }
    draw();
  </script>
</body>
</html>
